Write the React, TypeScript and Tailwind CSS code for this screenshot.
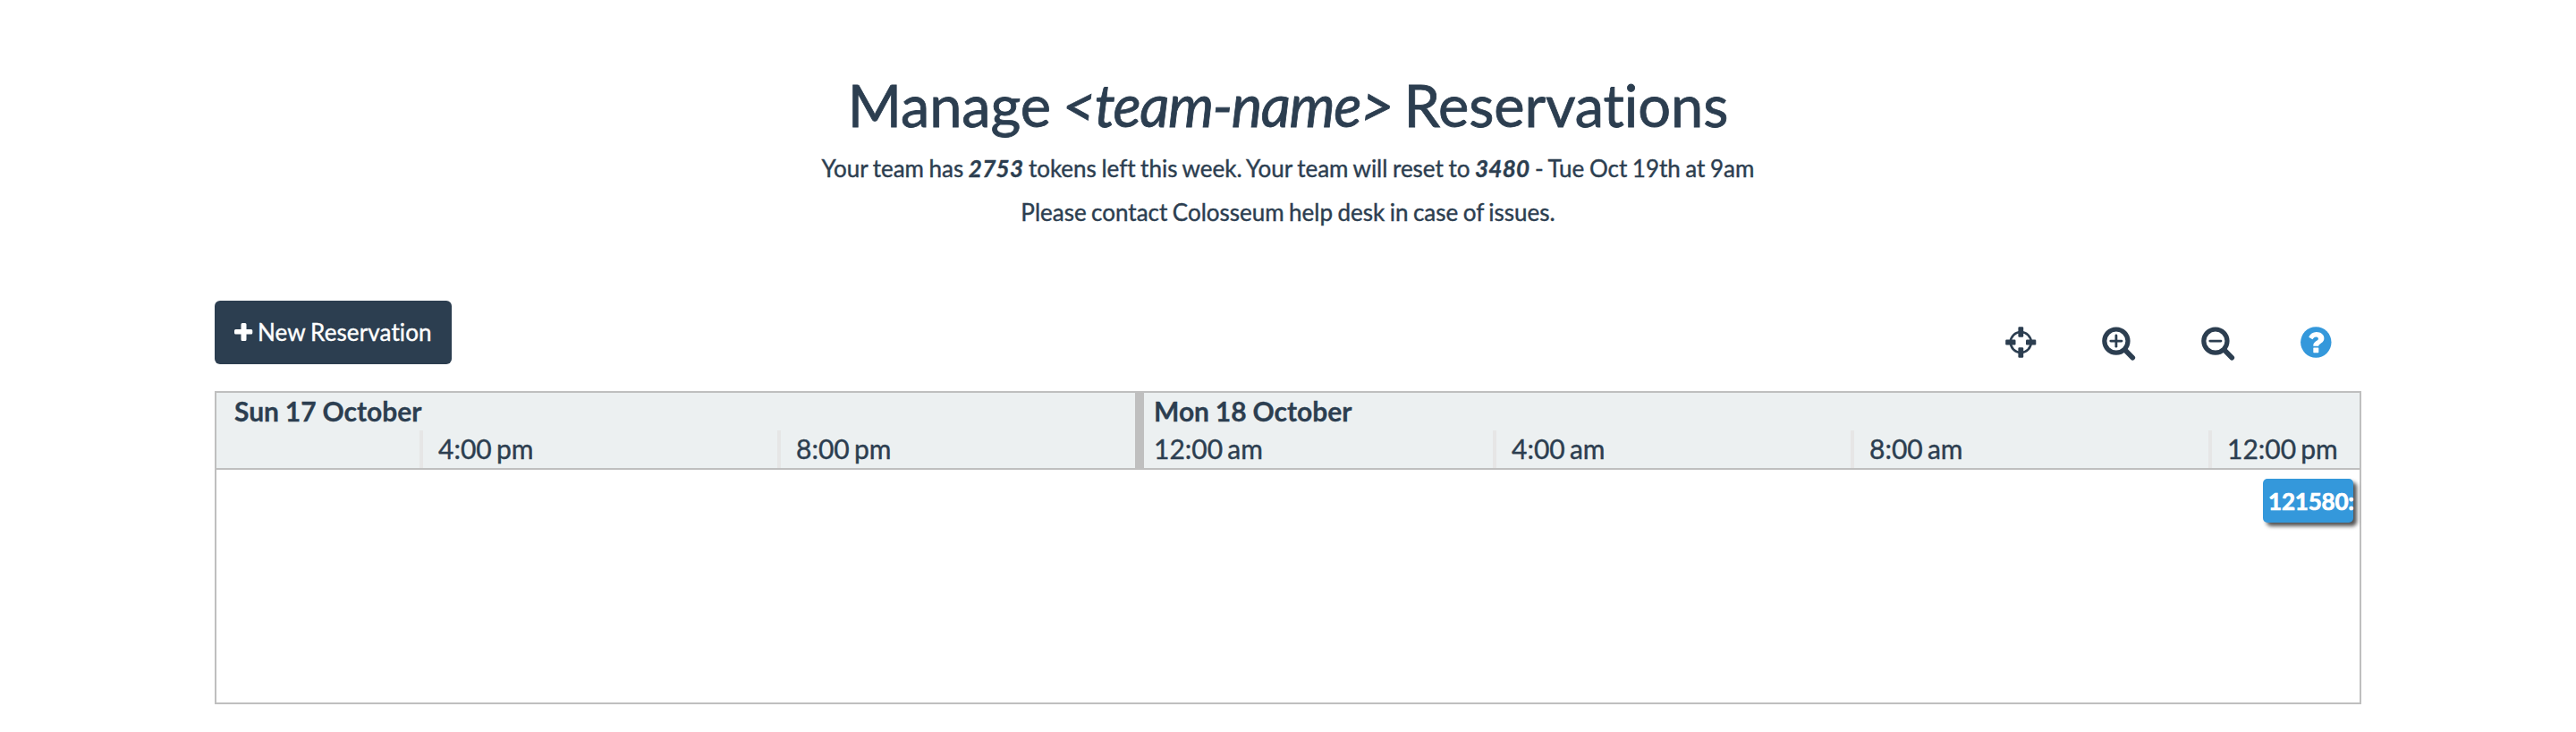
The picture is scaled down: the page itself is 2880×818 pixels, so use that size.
import React from "react";

const hours = [
  { day: "Sun 17 October", label: "", kind: "start" },
  { day: "", label: "4:00 pm", kind: "tick" },
  { day: "", label: "8:00 pm", kind: "tick" },
  { day: "Mon 18 October", label: "12:00 am", kind: "day" },
  { day: "", label: "4:00 am", kind: "tick" },
  { day: "", label: "8:00 am", kind: "tick" },
  { day: "", label: "12:00 pm", kind: "last" },
];

const widths: Record<string, string> = {
  start: "w-[227px] pl-5",
  tick: "w-[400px]",
  day: "w-[400px] border-l-[10px] border-[#bfbfbf] pl-[11px]",
  last: "w-[169px]",
};

function Column({ day, label, kind }: { day: string; label: string; kind: string }) {
  const ticked = kind === "tick" || kind === "last";
  return (
    <div className={`flex h-[84px] shrink-0 flex-col text-[30px] ${widths[kind]}`}>
      <div className="h-[42px] whitespace-nowrap font-bold leading-[40px] [-webkit-text-stroke:0.3px_#2c3e50] [word-spacing:-0.500px]">{day}</div>
      <div
        className={`h-[42px] whitespace-nowrap leading-[41px] [word-spacing:-2.500px] [-webkit-text-stroke:0.4px_#2c3e50] ${
          ticked ? "border-l-4 border-[#e6e6e6] pl-[17px]" : ""
        }`}
      >
        {label}
      </div>
    </div>
  );
}

function Crosshair() {
  return (
    <svg width="35" height="35" viewBox="0 0 35 35" fill="#2c3e50">
      <circle cx="17.300" cy="17.500" r="11.500" fill="none" stroke="#2c3e50" strokeWidth="2.600" />
      <rect x="14.400" y="0.300" width="5.800" height="11.500" rx="1.200" />
      <rect x="14.400" y="23.200" width="5.800" height="11.500" rx="1.200" />
      <rect x="0.200" y="14.600" width="11.300" height="5.800" rx="1.200" />
      <rect x="23" y="14.600" width="11.300" height="5.800" rx="1.200" />
    </svg>
  );
}

function Zoom({ plus }: { plus?: boolean }) {
  return (
    <svg width="38" height="38" viewBox="0 0 38 38" fill="none" stroke="#2c3e50">
      <circle cx="15.900" cy="16.100" r="13.100" strokeWidth="5.200" />
      <path d="M26 26.300 L34.300 34.800" strokeWidth="5.600" strokeLinecap="round" />
      <path d="M9.800 16.100 H22" strokeWidth="2.800" strokeLinecap="round" />
      {plus && <path d="M15.900 10 V22.200" strokeWidth="2.800" strokeLinecap="round" />}
    </svg>
  );
}

function Question() {
  return (
    <svg width="35" height="35" viewBox="0 0 35 35">
      <circle cx="17.300" cy="17.500" r="17.200" fill="#3498db" />
      <path
        d="M9.200 11.800 C11 8.200 13.800 6.100 17.800 6.100 C22.500 6.100 26.400 8.900 26.400 13 C26.400 18.800 20.200 18.600 20.200 21.800 H14.300 C14 16.200 19.900 16.400 19.900 13.600 C19.900 12.300 18.900 11.400 17.400 11.400 C15.700 11.400 14.400 12.600 13.400 14.300 Z"
        fill="#fff"
      />
      <rect x="14.300" y="23.500" width="6" height="5.700" rx="0.600" fill="#fff" />
    </svg>
  );
}

export default function App() {
  return (
    <main className="h-[818px] w-[2880px] overflow-hidden bg-white px-[240px] pt-[72px] font-['Lato',sans-serif] text-[#2c3e50] [font-variant-ligatures:none]">
      <header className="flex flex-col items-center whitespace-nowrap">
        <h1 className="h-[94px] text-[65px] leading-[91px] tracking-[-0.100px] [-webkit-text-stroke:0.8px_#2c3e50] [word-spacing:-4px]">
          Manage <em className="tracking-[-1.500px]">&lt;team-name&gt;</em> Reservations
        </h1>
        <p className="h-[49px] text-[26px] leading-[44px] [-webkit-text-stroke:0.4px_#2c3e50] [word-spacing:-1.100px]">
          Your team has <b className="tracking-[0.300px]"><i>2753</i></b> tokens left this week. Your team will reset to{" "}
          <b className="tracking-[0.300px]"><i>3480</i></b> - Tue Oct 19th at 9am
        </p>
        <p className="h-[49px] text-[26px] leading-[44px] [-webkit-text-stroke:0.4px_#2c3e50] [word-spacing:-1.200px]">
          Please contact Colosseum help desk in case of issues.
        </p>
      </header>

      <div className="mt-[72px] flex h-[101px] items-start justify-between">
        <button className="flex h-[71px] w-[265px] items-center gap-[5px] whitespace-nowrap rounded-md bg-[#2c3e50] pl-[22px] text-[26px] tracking-[0.120px] text-white [-webkit-text-stroke:0.4px_#fff] [word-spacing:-1px]">
          <svg width="21" height="21" viewBox="0 0 21 21">
            <path d="M7.500 1.500 Q7.500 0 9 0 H12 Q13.500 0 13.500 1.500 V7 H18.800 Q20.300 7 20.300 8.500 V11 Q20.300 12.500 18.800 12.500 H13.500 V18.500 Q13.500 20 12 20 H9 Q7.500 20 7.500 18.500 V12.500 H1.500 Q0 12.500 0 11 V8.500 Q0 7 1.500 7 H7.500 Z" fill="#fff" />
          </svg>
          New Reservation
        </button>
        <div className="flex items-start pr-[33px] pt-[29px]">
          <div className="w-[108px]"><Crosshair /></div>
          <div className="w-[111px]"><Zoom plus /></div>
          <div className="w-[111px]"><Zoom /></div>
          <Question />
        </div>
      </div>

      <section className="h-[350px] w-[2400px] border-2 border-[#bfbfbf] bg-white">
        <div className="flex h-[86px] overflow-hidden border-b-2 border-[#bfbfbf] bg-[#ecf0f1]">
          {hours.map((h, i) => (
            <Column key={i} {...h} />
          ))}
        </div>
        <div className="flex justify-end pr-[7px] pt-[10px]">
          <div className="h-[49px] w-[101px] rounded-[5px] bg-[#3498db] pl-[6px] shadow-[4px_4px_4px_#555]">
            <div className="whitespace-nowrap text-[26px] font-bold leading-[51px] tracking-[-0.200px] text-white [-webkit-text-stroke:0.7px_#fff]">
              121580:
            </div>
          </div>
        </div>
      </section>
    </main>
  );
}
